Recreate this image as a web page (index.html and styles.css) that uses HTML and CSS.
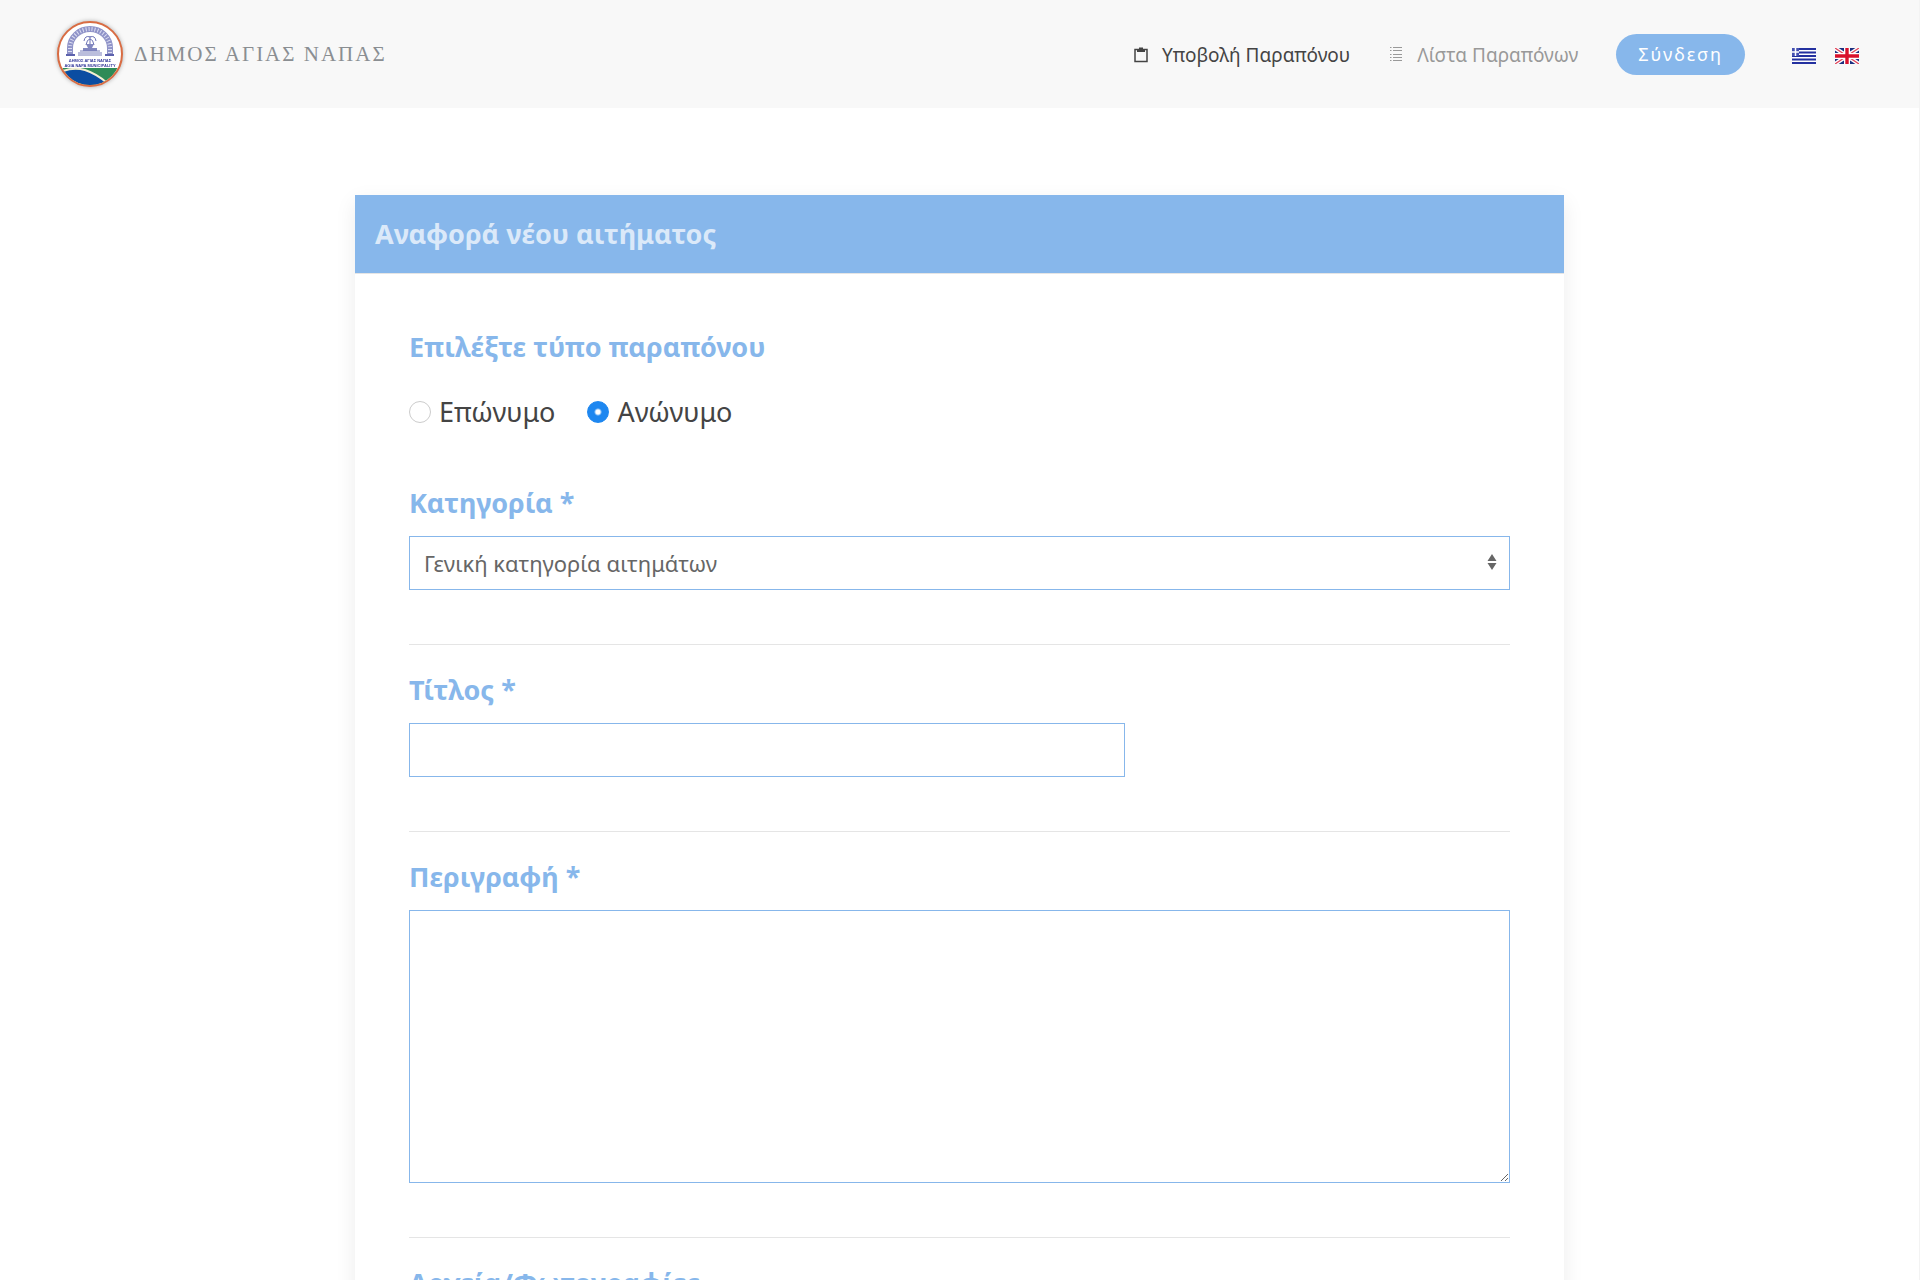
FILE: index.html
```html
<!DOCTYPE html>
<html lang="el">
<head>
  <meta charset="UTF-8">
  <meta name="viewport" content="width=device-width, initial-scale=1">
  <title>Δήμος Αγίας Νάπας</title>
  <link rel="stylesheet" href="styles.css">
</head>
<body>
  <header class="navbar">
    <a class="brand" href="#">
      <svg class="brand-logo" viewBox="0 0 72 72" aria-hidden="true">
        <defs>
          <clipPath id="seal"><circle cx="36" cy="36" r="31"/></clipPath>
        </defs>
        <circle cx="36" cy="36" r="32" fill="#fff"/>
        <g clip-path="url(#seal)">
          <rect x="0" y="50" width="72" height="22" fill="#2e8b57"/>
          <path d="M0 50 L10 53 Q20 50 30 52 Q42 55 52 65 L52 72 H0Z" fill="#0a4da2"/>
          <path d="M9 53 Q20 49 31 52 Q43 56 53 65" fill="none" stroke="#f3efd2" stroke-width="2"/>
        </g>
        <!-- arch -->
        <path d="M16 37 V30 A20 19 0 0 1 56 30 V37" fill="none" stroke="#8f93c8" stroke-width="6"/>
        <path d="M16 37 V30 A20 19 0 0 1 56 30 V37" fill="none" stroke="#dcdef2" stroke-width="4" stroke-dasharray="1 2"/>
        <path d="M12 37 H21 M51 37 H60" stroke="#5d62ad" stroke-width="2"/>
        <!-- fountain -->
        <path d="M30 23 Q31 17 36 19 Q41 17 42 23 M32 27 Q33 21 36 21 Q39 21 40 27 M36 18 V30" fill="none" stroke="#6d73b5" stroke-width="1"/>
        <path d="M32 26 H40 L38 30 H34Z M29 30 H43 V33 H29Z" fill="#8388c0"/>
        <path d="M26 33 H46 M24 35 H48 M24 37 H48" stroke="#777cba" stroke-width="1"/>
        <text class="seal-text" x="36" y="44" text-anchor="middle">ΔΗΜΟΣ ΑΓΙΑΣ ΝΑΠΑΣ</text>
        <text class="seal-text" x="36" y="49" text-anchor="middle">AGIA NAPA MUNICIPALITY</text>
        <circle cx="36" cy="36" r="32" fill="none" stroke="#d96c43" stroke-width="2"/>
      </svg>
      <span class="brand-name">ΔΗΜΟΣ ΑΓΙΑΣ ΝΑΠΑΣ</span>
    </a>
    <nav class="nav">
      <a class="nav-link active" href="#">
        <svg class="nav-icon" viewBox="0 0 16 16" aria-hidden="true">
          <path d="M2 2.500 H14 V14.500 H2Z" fill="none" stroke="currentColor" stroke-width="1.500"/>
          <path d="M4 2 H6 V0.500 H10 V2 H12 V5 H4Z" fill="currentColor"/>
        </svg>
        Υποβολή Παραπόνου
      </a>
      <a class="nav-link" href="#">
        <svg class="nav-icon" viewBox="0 0 16 16" aria-hidden="true">
          <path d="M2 0.500 H3.500 M5 0.500 H14 M2 3.500 H3.500 M5 3.500 H14 M2 7.500 H3.500 M5 7.500 H14 M2 10.500 H3.500 M5 10.500 H14 M2 13.500 H3.500 M5 13.500 H14" stroke="currentColor" stroke-width="1"/>
        </svg>
        Λίστα Παραπόνων
      </a>
      <button class="login" type="button">Σύνδεση</button>
      <div class="languages">
        <a class="lang" href="#" aria-label="Ελληνικά">
          <svg class="flag" viewBox="0 0 24 16" aria-hidden="true">
            <rect width="24" height="16" fill="#fff"/>
            <path d="M0 1 H24 M0 4.500 H24 M0 8 H24 M0 11.500 H24 M0 15 H24" stroke="#2431a0" stroke-width="1.800"/>
            <rect width="7" height="8" fill="#4450b0"/>
            <path d="M3.500 0 V8 M0 4 H7" stroke="#fff" stroke-width="1.500"/>
          </svg>
        </a>
        <a class="lang" href="#" aria-label="English">
          <svg class="flag" viewBox="0 0 24 16" aria-hidden="true">
            <rect width="24" height="16" fill="#1c2f80"/>
            <path d="M0 0 L24 16 M24 0 L0 16" stroke="#fff" stroke-width="4"/>
            <path d="M0 0 L24 16 M24 0 L0 16" stroke="#e0455a" stroke-width="1.300"/>
            <path d="M12 0 V16 M0 8 H24" stroke="#fff" stroke-width="6"/>
            <path d="M12 0 V16 M0 8 H24" stroke="#d8102c" stroke-width="3.400"/>
          </svg>
        </a>
      </div>
    </nav>
  </header>

  <main class="page">
    <form class="card">
      <h1 class="card-header">Αναφορά νέου αιτήματος</h1>
      <div class="card-body">
        <fieldset class="field type">
          <legend class="label">Επιλέξτε τύπο παραπόνου</legend>
          <div class="radios">
            <label class="radio-label"><input class="radio" type="radio" name="type" value="named"> Επώνυμο</label>
            <label class="radio-label"><input class="radio" type="radio" name="type" value="anonymous" checked> Ανώνυμο</label>
          </div>
        </fieldset>
        <div class="field">
          <label class="label" for="category">Κατηγορία *</label>
          <div class="select-wrap">
            <select class="control" id="category">
              <option>Γενική κατηγορία αιτημάτων</option>
            </select>
            <svg class="select-arrows" viewBox="0 0 10 16" aria-hidden="true">
              <path d="M5 0 L9.500 7 H0.500Z M0.500 9 H9.500 L5 16Z" fill="#666"/>
            </svg>
          </div>
        </div>
        <div class="field ruled">
          <label class="label" for="title">Τίτλος *</label>
          <input class="control title-input" type="text" id="title">
        </div>
        <div class="field ruled">
          <label class="label" for="description">Περιγραφή *</label>
          <textarea class="control description" id="description"></textarea>
        </div>
        <div class="field ruled">
          <label class="label" for="files">Αρχεία/Φωτογραφίες</label>
          <input class="control" type="file" id="files" multiple>
        </div>
      </div>
    </form>
  </main>
</body>
</html>
```

FILE: styles.css
```css
* {
  box-sizing: border-box;
}
body {
  margin: 0;
  height: 100vh;
  display: flex;
  flex-direction: column;
  border-right: 1px solid #f3f3f3;
  background: #fff;
  color: #444;
  font-family: "Noto Sans", "Open Sans", sans-serif;
  font-size: 22px;
}
a {
  color: inherit;
  text-decoration: none;
}

/* navbar */
.navbar {
  flex: none;
  display: flex;
  align-items: center;
  justify-content: space-between;
  height: 108px;
  padding: 0 60px 0 54px;
  background: #f8f8f8;
}
.brand {
  display: flex;
  align-items: center;
  gap: 8px;
}
.brand-logo {
  width: 72px;
  height: 72px;
  filter: drop-shadow(0 0 2px rgba(0, 0, 0, 0.3));
}
.seal-text {
  font-family: "Liberation Sans", Arial, sans-serif;
  font-size: 4px;
  font-weight: bold;
  fill: #34399a;
}
.brand-name {
  font-family: "Liberation Serif", "Times New Roman", serif;
  font-size: 21px;
  letter-spacing: 2px;
  color: #8a8e92;
}
.nav {
  display: flex;
  align-items: center;
}
.nav-link {
  display: flex;
  align-items: center;
  gap: 13px;
  margin-right: 38px;
  padding-top: 2px;
  font-size: 19px;
  color: #999;
}
.nav-link.active {
  color: #444;
}
.nav-icon {
  width: 16px;
  height: 16px;
}
.login {
  height: 41px;
  padding: 0 22px;
  border: 0;
  border-radius: 21px;
  background: #87b7eb;
  color: #fff;
  font-family: inherit;
  font-size: 18px;
  letter-spacing: 2px;
}
.languages {
  display: flex;
  gap: 19px;
  margin-left: 47px;
  padding-top: 4px;
}
.flag {
  display: block;
  width: 24px;
  height: 16px;
}

/* form card */
.page {
  flex: 1;
  min-height: 0;
  overflow-y: auto;
  scrollbar-width: none;
  padding: 87px 40px;
}
.card {
  max-width: 1209px;
  margin: 0 auto;
  background: #fff;
  box-shadow: 0 7px 20px rgba(0, 0, 0, 0.08);
}
.card-header {
  margin: 0;
  padding: 20px;
  border-bottom: 1px solid #e5e5e5;
  background: #87b7eb;
  color: #dbe9f9;
  font-size: 27px;
  line-height: 38px;
}
.card-body {
  padding: 53px 54px;
}
.field {
  margin: 0 0 54px;
  padding: 0;
  border: 0;
}
.field.type {
  margin-bottom: 51px;
}
.field.ruled {
  padding-top: 25px;
  border-top: 1px solid #e5e5e5;
}
.label {
  display: block;
  margin-bottom: 13px;
  padding: 0;
  color: #87b7eb;
  font-size: 27px;
  font-weight: bold;
  line-height: 40px;
}
.radios {
  display: flex;
  gap: 32px;
  padding-top: 12px;
}
.radio-label {
  display: flex;
  align-items: center;
  gap: 8px;
  font-size: 27px;
  line-height: 40px;
}
.radio {
  appearance: none;
  width: 22px;
  height: 22px;
  margin: 0;
  border: 1px solid #ccc;
  border-radius: 50%;
}
.radio:checked {
  border-color: #1e87f0;
  background: radial-gradient(circle, #fff 2px, #1e87f0 4px);
}
.control {
  display: block;
  width: 100%;
  height: 54px;
  padding: 0 14px;
  border: 1px solid #87b7eb;
  border-radius: 0;
  background: #fff;
  color: #666;
  font-family: inherit;
  font-size: 22px;
}
.select-wrap {
  position: relative;
}
select.control {
  appearance: none;
}
.select-arrows {
  position: absolute;
  top: 18px;
  right: 13px;
  width: 10px;
  height: 16px;
  pointer-events: none;
}
.title-input {
  width: 65%;
}
.description {
  height: 273px;
  padding: 10px 14px;
  resize: vertical;
}
```
